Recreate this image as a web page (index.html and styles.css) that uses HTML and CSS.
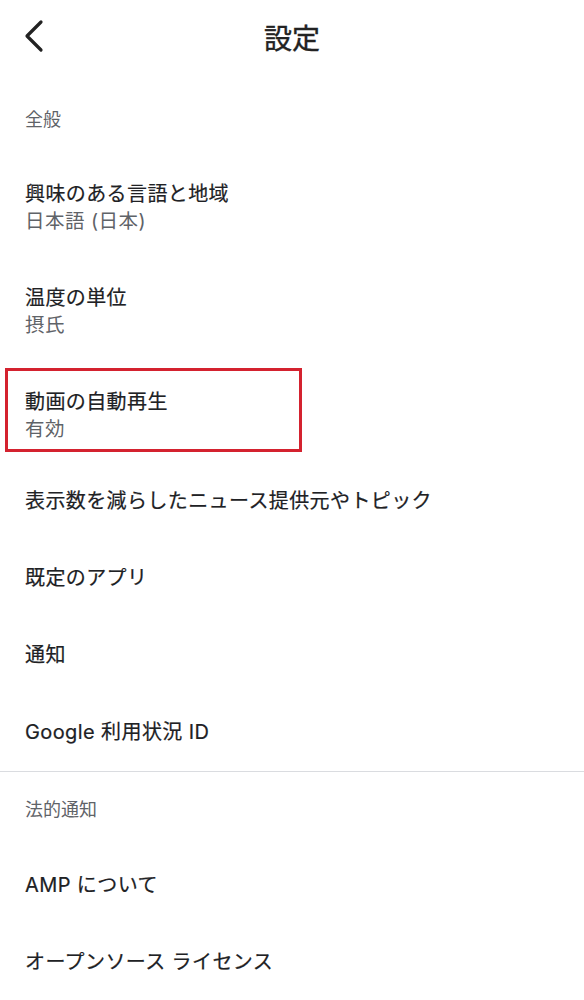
FILE: index.html
```html
<!DOCTYPE html>
<html lang="ja">
<head>
  <meta charset="UTF-8">
  <title>設定</title>
  <link rel="stylesheet" href="styles.css">
</head>
<body>
  <header class="topbar">
    <button class="back" type="button" aria-label="戻る">
      <svg width="24" height="34" viewBox="0 0 24 34">
        <polyline points="19,3 5,17 19,31" fill="none" stroke="#222" stroke-width="3.2" stroke-linecap="round" stroke-linejoin="round"/>
      </svg>
    </button>
    <h1>設定</h1>
  </header>

  <section class="group">
    <div class="group-label first">全般</div>

    <div class="row two">
      <div class="row-title">興味のある言語と地域</div>
      <div class="row-sub">日本語 (日本)</div>
    </div>
    <div class="row two">
      <div class="row-title">温度の単位</div>
      <div class="row-sub">摂氏</div>
    </div>
    <div class="row two marked">
      <div class="row-title">動画の自動再生</div>
      <div class="row-sub">有効</div>
      <span class="highlight"></span>
    </div>
    <div class="row"><div class="row-title">表示数を減らしたニュース提供元やトピック</div></div>
    <div class="row"><div class="row-title">既定のアプリ</div></div>
    <div class="row"><div class="row-title">通知</div></div>
    <div class="row"><div class="row-title">Google 利用状況 ID</div></div>
  </section>

  <section class="group legal">
    <div class="group-label">法的通知</div>
    <div class="row"><div class="row-title">AMP について</div></div>
    <div class="row"><div class="row-title">オープンソース ライセンス</div></div>
  </section>
</body>
</html>
```

FILE: styles.css
```css
body {
  margin: 0;
  padding: 0;
  background: #fff;
  font-family: "Inter", "Noto Sans CJK JP", sans-serif;
  color: #202124;
}

.topbar {
  position: relative;
  height: 74px;
  display: flex;
  align-items: center;
  justify-content: center;
}

.topbar h1 {
  margin: 0;
  font-family: "Noto Sans CJK JP", sans-serif;
  font-size: 28px;
  font-weight: 400;
  -webkit-text-stroke: 0.4px #222;
  line-height: 34px;
  color: #222;
}

.back {
  position: absolute;
  left: 22px;
  top: 19px;
  padding: 0;
  border: none;
  background: none;
  display: flex;
}

.group-label {
  padding: 26px 25px;
  font-size: 18px;
  line-height: 23px;
  color: #5f6368;
}

.group-label.first {
  padding: 34px 25px 20px;
}

.row {
  position: relative;
  padding: 27px 25px;
}

.row.two {
  padding: 32px 25px 22px;
}

.row-title {
  font-size: 20px;
  font-weight: 400;
  -webkit-text-stroke: 0.2px #202124;
  letter-spacing: 0.4px;
  line-height: 23px;
  color: #202124;
}

.row-sub {
  margin-top: 4px;
  font-size: 19.5px;
  letter-spacing: 0.5px;
  line-height: 23px;
  color: #5f6368;
}

.legal {
  border-top: 1px solid #dadce0;
}

.highlight {
  position: absolute;
  left: 5px;
  top: 9px;
  width: 291px;
  height: 78px;
  border: 3px solid #d4222f;
}
```
